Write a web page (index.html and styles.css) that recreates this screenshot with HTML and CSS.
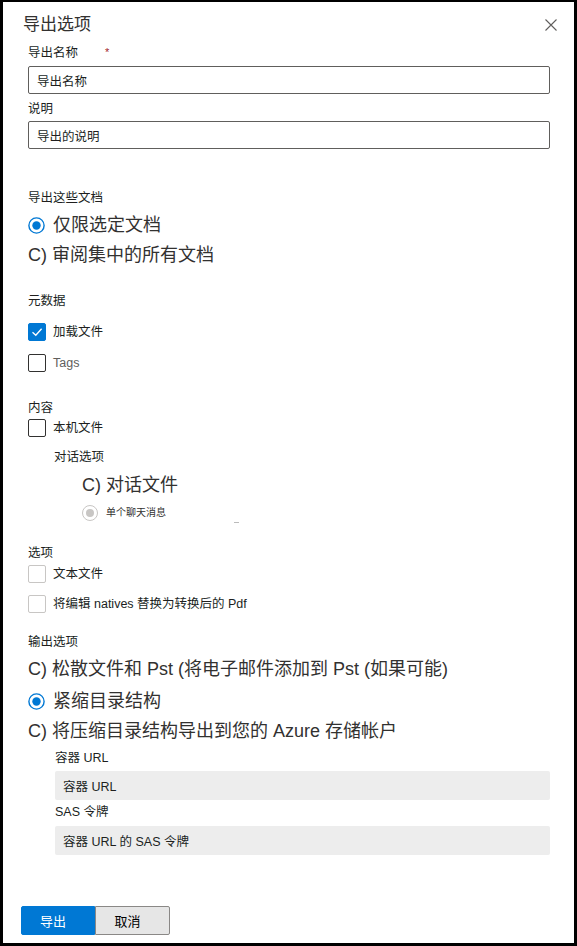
FILE: index.html
```html
<!DOCTYPE html>
<html lang="zh-CN">
<head>
<meta charset="utf-8">
<title>导出选项</title>
<link rel="stylesheet" href="styles.css">
</head>
<body>
<div class="panel">
  <div class="header">
    <div class="title">导出选项</div>
    <svg class="close" width="12" height="12" viewBox="0 0 12 12"><path d="M0.5 0.5 L11.5 11.5 M11.5 0.5 L0.5 11.5" stroke="#605e5c" stroke-width="1.1" fill="none"/></svg>
  </div>
  <div class="form">
    <div class="label l-name">导出名称<span class="req">*</span></div>
    <div class="input i-name">导出名称</div>
    <div class="label l-desc">说明</div>
    <div class="input i-desc">导出的说明</div>

    <div class="label h-docs">导出这些文档</div>
    <div class="row radio-row">
      <svg class="radio" width="17" height="17" viewBox="0 0 17 17"><circle cx="8.5" cy="8.5" r="7.6" fill="#fff" stroke="#0078d4" stroke-width="1.4"/><circle cx="8.5" cy="8.5" r="4.2" fill="#0078d4"/></svg>
      <span class="big">仅限选定文档</span>
    </div>
    <div class="row radio-row"><span class="big">C) 审阅集中的所有文档</span></div>

    <div class="label h-meta">元数据</div>
    <div class="row check-row">
      <span class="box checked"><svg width="18" height="18" viewBox="0 0 18 18"><path d="M4.5 9.2 L7.8 12.3 L13.6 5.8" stroke="#fff" stroke-width="1.3" fill="none"/></svg></span>
      <span class="text">加载文件</span>
    </div>
    <div class="row check-row">
      <span class="box"></span>
      <span class="text muted">Tags</span>
    </div>

    <div class="label h-content">内容</div>
    <div class="row check-row short">
      <span class="box"></span>
      <span class="text">本机文件</span>
    </div>
    <div class="label sub-label">对话选项</div>
    <div class="row radio-row indent2"><span class="big">C) 对话文件</span></div>
    <div class="row disabled-row indent2">
      <span class="radio-dis"></span>
      <span class="tiny">单个聊天消息</span>
      <span class="dash"></span>
    </div>

    <div class="label h-opts">选项</div>
    <div class="row check-row short first-opt">
      <span class="box light"></span>
      <span class="text">文本文件</span>
    </div>
    <div class="row check-row short second-opt">
      <span class="box light"></span>
      <span class="text">将编辑 natives 替换为转换后的 Pdf</span>
    </div>

    <div class="label h-out">输出选项</div>
    <div class="row radio-row"><span class="big">C) 松散文件和 Pst (将电子邮件添加到 Pst (如果可能)</span></div>
    <div class="row radio-row r-compact">
      <svg class="radio" width="17" height="17" viewBox="0 0 17 17"><circle cx="8.5" cy="8.5" r="7.6" fill="#fff" stroke="#0078d4" stroke-width="1.4"/><circle cx="8.5" cy="8.5" r="4.2" fill="#0078d4"/></svg>
      <span class="big">紧缩目录结构</span>
    </div>
    <div class="row radio-row"><span class="big">C) 将压缩目录结构导出到您的 Azure 存储帐户</span></div>

    <div class="azure">
      <div class="label l-url">容器 URL</div>
      <div class="field f-url">容器 URL</div>
      <div class="label l-sas">SAS 令牌</div>
      <div class="field f-sas">容器 URL 的 SAS 令牌</div>
    </div>
  </div>
  <div class="footer">
    <button class="btn primary">导出</button>
    <button class="btn secondary">取消</button>
  </div>
</div>
</body>
</html>
```
FILE: styles.css
```css
* { box-sizing: border-box; }
html, body { margin: 0; padding: 0; background: #fff; }
body {
  font-family: "Liberation Sans", "Noto Sans CJK SC", sans-serif;
  color: #323130;
}
.panel {
  width: 577px;
  height: 946px;
  border-style: solid;
  border-color: #000;
  border-width: 2px 3px 3px 3px;
  display: flex;
  flex-direction: column;
  background: #fff;
}
.header {
  margin-top: 11px;
  height: 24px;
  display: flex;
  align-items: center;
  justify-content: space-between;
  padding-left: 20px;
  padding-right: 17px;
}
.title { font-size: 17px; line-height: 24px; color: #323130; }
.close { display: block; }

.form { padding: 0 24px 0 25px; display: flex; flex-direction: column; }

.label { font-size: 12.5px; line-height: 16px; height: 16px; color: #201f1e; white-space: nowrap; }
.req { color: #a4262c; margin-left: 27px; position: relative; top: -1px; font-size: 11px; }

.input {
  height: 28px;
  border: 1px solid #605e5c;
  border-radius: 2px;
  padding: 0 8px;
  font-size: 12.5px;
  display: flex;
  align-items: center;
  color: #201f1e;
}
.l-name { margin-top: 8px; }
.i-name { margin-top: 5px; }
.l-desc { margin-top: 7px; }
.i-desc { margin-top: 4px; }

.h-docs { margin-top: 41px; }
.row { display: flex; align-items: center; white-space: nowrap; }
.radio-row { height: 30px; }
.h-docs + .radio-row { margin-top: 4px; }
.radio { display: block; margin-right: 8px; flex: none; }
.big { font-size: 18px; line-height: 22px; color: #323130; }

.h-meta { margin-top: 23px; }
.check-row { height: 31px; }
.check-row.short { height: 24px; }
.h-meta + .check-row { margin-top: 7px; }
.box {
  width: 18px;
  height: 18px;
  border: 1px solid #323130;
  border-radius: 2px;
  margin-right: 7px;
  flex: none;
  display: block;
  position: relative;
}
.box.checked { background: #0078d4; border-color: #0078d4; }
.box.checked svg { position: absolute; left: -1px; top: -1px; }
.box.light { border-color: #c8c6c4; }
.text { font-size: 12.5px; line-height: 16px; color: #201f1e; }
.muted { color: #605e5c; }

.h-content { margin-top: 22px; }
.sub-label { margin-top: 9px; padding-left: 26px; }
.indent2 { padding-left: 54px; }
.sub-label + .radio-row { margin-top: 5px; }
.disabled-row { height: 26px; position: relative; }
.radio-dis {
  width: 16px;
  height: 16px;
  border-radius: 50%;
  border: 1px solid #c8c6c4;
  margin-right: 8px;
  flex: none;
  position: relative;
}
.radio-dis::after {
  content: "";
  position: absolute;
  left: 3px; top: 3px;
  width: 8px; height: 8px;
  border-radius: 50%;
  background: #c8c6c4;
}
.tiny { font-size: 10px; line-height: 12px; color: #323130; }
.dash {
  position: absolute;
  left: 206px;
  top: 22px;
  width: 5px;
  height: 1px;
  background: #bbb;
}

.h-opts { margin-top: 19px; }
.first-opt { margin-top: 1px; }
.second-opt { margin-top: 6px; }

.h-out { margin-top: 18px; }
.h-out + .radio-row { margin-top: 4px; }
.r-compact { margin-top: 2px; }

.azure { padding-left: 27px; display: flex; flex-direction: column; }
.l-url { margin-top: 4px; }
.field {
  height: 29px;
  background: #ededed;
  border-radius: 2px;
  padding: 0 8px;
  font-size: 12.5px;
  display: flex;
  align-items: center;
  color: #201f1e;
}
.f-url { margin-top: 5px; }
.l-sas { margin-top: 4px; }
.f-sas { margin-top: 6px; }

.footer {
  margin-top: auto;
  padding: 0 0 8px 18px;
  display: flex;
}
.btn {
  height: 29px;
  font-family: "Liberation Sans", "Noto Sans CJK SC", sans-serif;
  font-size: 13px;
  margin: 0;
  padding: 0 10px 0 0;
  cursor: pointer;
}
.primary {
  width: 74px;
  background: #0078d4;
  color: #fff;
  border: 1px solid #0078d4;
  border-radius: 2px 0 0 2px;
}
.secondary {
  width: 75px;
  background: #e6e6e6;
  color: #000;
  border: 1px solid #8a8886;
  border-radius: 0 2px 2px 0;
}
```
